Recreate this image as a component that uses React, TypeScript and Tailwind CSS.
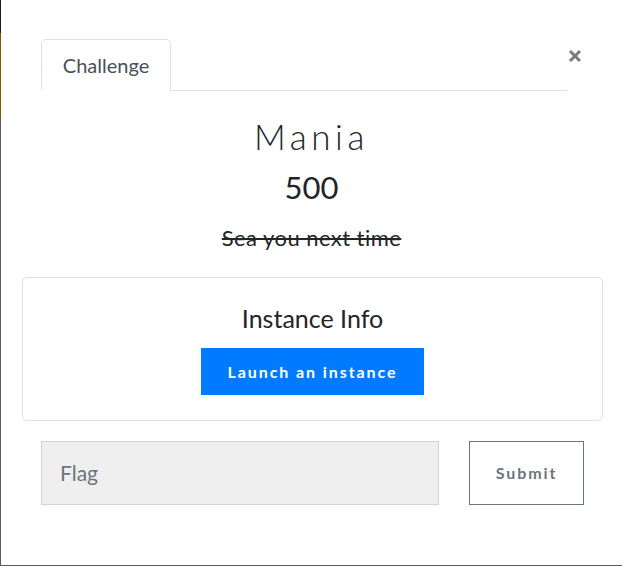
export default function App() {
  return (
    <div className="flex h-[566px] w-[622px] bg-white font-['Lato','Liberation_Sans',sans-serif]">

      {/* Left edge strip */}

      <div className="flex w-px flex-col">
        <div className="h-[33px] bg-[#1e1e1e]" />
        <div className="h-[87px] bg-[#7a5b00]" />
        <div className="flex-1 bg-[#5a5a5a]" />
      </div>

      <div className="flex flex-1 flex-col border-b border-[#5a5a5a]">

        {/* Tabs + close */}

        <div className="flex items-start pl-[40px] pt-[39px]">
          <div className="flex h-[52px] w-[526px] items-end border-b border-[#dee2e6]">
            <div className="-mb-px flex h-[52px] w-[130px] items-center justify-center rounded-t-[5px] border border-[#dee2e6] border-b-white text-[20px] text-[#495057]">
              Challenge
            </div>
          </div>
          <button className="ml-px mt-[10px] flex h-[14px] w-[14px] items-center justify-center text-[#7a7a7a]">
            <svg viewBox="0 0 14 14" className="h-[14px] w-[14px]">
              <path d="M2 2 L12 12 M12 2 L2 12" stroke="currentColor" strokeWidth="3" />
            </svg>
          </button>
        </div>

        {/* Title */}

        <h2 className="mt-[26px] text-center text-[35px] font-light leading-[38px] tracking-[0.13em] text-[#212529]">
          Mania
        </h2>

        <h3 className="mt-[14px] text-center text-[31px] leading-[37px] text-[#212529]">
          500
        </h3>

        <p className="mt-[19px] text-center text-[22px] leading-[26px] tracking-[0.02em] text-[#212529] line-through">
          Sea you next time
        </p>

        {/* Instance */}

        <div className="ml-[21px] mt-[26px] flex w-[581px] flex-col items-center rounded-[5px] border border-[#dee2e6] pb-[25px] pt-[25px]">
          <div className="text-[25px] leading-[30px] text-[#212529]">
            Instance Info
          </div>
          <button className="mt-[15px] h-[47px] w-[223px] bg-[#007bff] text-[16px] font-bold tracking-[0.12em] text-white">
            Launch an instance
          </button>
        </div>

        {/* Flag */}

        <div className="mt-[20px] flex gap-[30px] pl-[40px]">
          <div className="flex h-[64px] w-[398px] items-center border border-[#cfd4da] bg-[#efefef] pl-[18px] text-[21px] text-[#6c757d]">
            Flag
          </div>
          <button className="h-[64px] w-[115px] border border-[#6c757d] text-[16px] font-bold tracking-[0.12em] text-[#6c757d]">
            Submit
          </button>
        </div>

      </div>
    </div>
  );
}
